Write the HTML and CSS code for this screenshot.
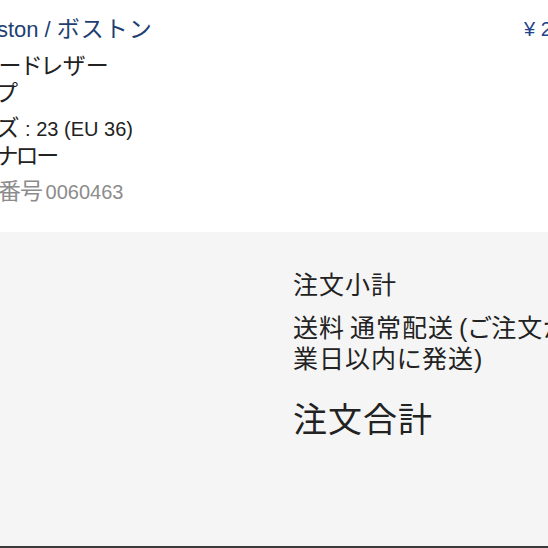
FILE: index.html
```html
<!DOCTYPE html>
<html lang="ja">
<head>
    <meta charset="UTF-8">
    <meta name="viewport" content="width=device-width, initial-scale=1.0">
    <title>ご注文内容の確認</title>
    <link rel="stylesheet" href="styles.css">
</head>
<body>
    <div class="cart-item">
        <div class="item-body">
            <h2 class="item-name">Boston / <span class="kana">ボストン</span></h2>
            <div class="item-specs">
                <div class="spec-group">
                    <p>スエードレザー</p>
                    <p>タイプ</p>
                </div>
                <div class="spec-group">
                    <p>サイズ<span class="num"> : 23 (EU 36)</span></p>
                    <p class="narrow">足幅ナロー</p>
                </div>
                <div class="spec-group">
                    <p class="item-code">商品番号<span class="num"> 0060463</span></p>
                </div>
            </div>
        </div>
        <div class="item-price">¥ 24,200</div>
    </div>

    <div class="summary">
        <div class="summary-row">
            <span class="summary-label">注文小計</span>
            <span class="summary-value">¥ 24,200</span>
        </div>
        <div class="summary-row">
            <span class="summary-label">送料 通常配送 (ご注文から2〜3営業日以内に発送)</span>
            <span class="summary-value">¥ 0</span>
        </div>
        <div class="summary-row total">
            <span class="summary-label">注文合計</span>
            <span class="summary-value">¥ 24,200</span>
        </div>
    </div>
</body>
</html>
```

FILE: styles.css
```css
html, body {
    overflow: hidden;
}
body {
    margin: 0;
    height: 548px;
    display: flex;
    flex-direction: column;
    font-family: "Liberation Sans", "Noto Sans CJK JP", sans-serif;
    color: #222;
    background-color: #fff;
}
p {
    margin: 0;
}

/* item row */
.cart-item {
    display: grid;
    grid-template-columns: 554px auto;
    margin-left: -30px;
    padding-top: 14px;
    height: 218px;
}
.item-name {
    margin: 0;
    font-size: 22px;
    font-weight: normal;
    line-height: 30px;
    color: #1f3f73;
    white-space: nowrap;
}
.kana {
    font-size: 23px;
    letter-spacing: 1px;
}
.item-price {
    font-size: 20px;
    line-height: 30px;
    color: #23448a;
    white-space: nowrap;
}
.item-specs {
    margin-left: -16px;
    margin-top: 8px;
    font-size: 23px;
    line-height: 27px;
    letter-spacing: 1px;
    font-feature-settings: "palt";
    white-space: nowrap;
}
.spec-group + .spec-group {
    margin-top: 8px;
}
.num {
    font-size: 20px;
    letter-spacing: 0;
}
.narrow {
    letter-spacing: -2px;
}
.item-code {
    color: #8c8c8c;
    letter-spacing: -1px;
    word-spacing: -2px;
}

/* order summary */
.summary {
    flex: 1;
    background-color: #f5f5f5;
    border-bottom: 2px solid #3a3a3a;
    padding: 38px 0 0 293px;
}
.summary-row {
    display: grid;
    grid-template-columns: 388px auto;
    column-gap: 40px;
    font-size: 25px;
    line-height: 31px;
    letter-spacing: 1px;
    word-spacing: -3px;
    font-feature-settings: "palt";
}
.summary-row + .summary-row {
    margin-top: 12px;
}
.summary-value {
    letter-spacing: 0;
    white-space: nowrap;
}
.summary-row.total {
    margin-top: 22px;
    font-size: 34px;
    line-height: 46px;
    letter-spacing: 1px;
    font-feature-settings: normal;
}
```
